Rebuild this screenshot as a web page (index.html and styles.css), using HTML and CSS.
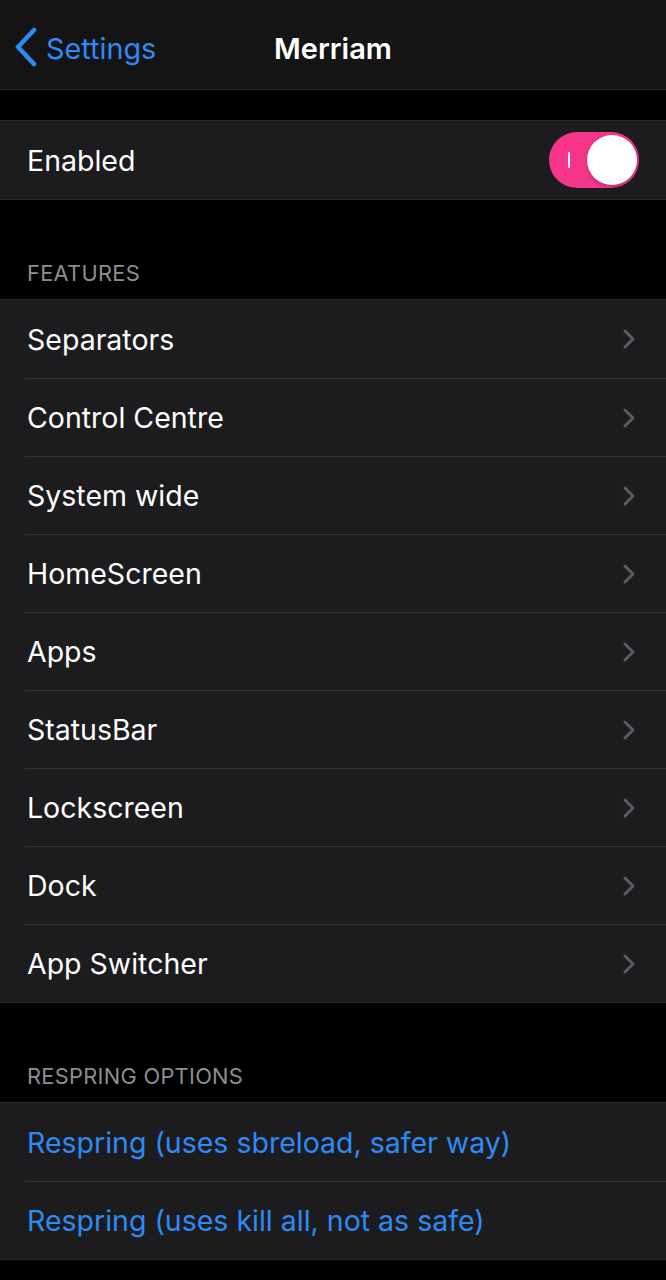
FILE: index.html
```html
<!DOCTYPE html>
<html>
<head>
<meta charset="utf-8">
<link rel="stylesheet" href="styles.css">
</head>
<body>
<div class="page">
  <header class="nav">
    <div class="back">
      <svg class="back-icon" width="26" height="40" viewBox="0 0 26 40"><path d="M21 3 L5 20 L21 37" fill="none" stroke="#2e8af4" stroke-width="4.6" stroke-linecap="round" stroke-linejoin="round"/></svg>
      <span class="back-label">Settings</span>
    </div>
    <div class="title">Merriam</div>
  </header>

  <div class="spacer-top"></div>

  <section class="group">
    <div class="row">
      <span class="label">Enabled</span>
      <div class="switch"><span class="on-mark"></span><span class="knob"></span></div>
    </div>
  </section>

  <div class="section-header">FEATURES</div>
  <section class="group">
    <div class="row link"><span class="label">Separators</span><svg class="chev" width="14" height="22" viewBox="0 0 14 22"><path d="M3 3 L11 11 L3 19" fill="none" stroke="#5c5c60" stroke-width="3" stroke-linecap="round" stroke-linejoin="round"/></svg></div>
    <div class="row link"><span class="label">Control Centre</span><svg class="chev" width="14" height="22" viewBox="0 0 14 22"><path d="M3 3 L11 11 L3 19" fill="none" stroke="#5c5c60" stroke-width="3" stroke-linecap="round" stroke-linejoin="round"/></svg></div>
    <div class="row link"><span class="label">System wide</span><svg class="chev" width="14" height="22" viewBox="0 0 14 22"><path d="M3 3 L11 11 L3 19" fill="none" stroke="#5c5c60" stroke-width="3" stroke-linecap="round" stroke-linejoin="round"/></svg></div>
    <div class="row link"><span class="label">HomeScreen</span><svg class="chev" width="14" height="22" viewBox="0 0 14 22"><path d="M3 3 L11 11 L3 19" fill="none" stroke="#5c5c60" stroke-width="3" stroke-linecap="round" stroke-linejoin="round"/></svg></div>
    <div class="row link"><span class="label">Apps</span><svg class="chev" width="14" height="22" viewBox="0 0 14 22"><path d="M3 3 L11 11 L3 19" fill="none" stroke="#5c5c60" stroke-width="3" stroke-linecap="round" stroke-linejoin="round"/></svg></div>
    <div class="row link"><span class="label">StatusBar</span><svg class="chev" width="14" height="22" viewBox="0 0 14 22"><path d="M3 3 L11 11 L3 19" fill="none" stroke="#5c5c60" stroke-width="3" stroke-linecap="round" stroke-linejoin="round"/></svg></div>
    <div class="row link"><span class="label">Lockscreen</span><svg class="chev" width="14" height="22" viewBox="0 0 14 22"><path d="M3 3 L11 11 L3 19" fill="none" stroke="#5c5c60" stroke-width="3" stroke-linecap="round" stroke-linejoin="round"/></svg></div>
    <div class="row link"><span class="label">Dock</span><svg class="chev" width="14" height="22" viewBox="0 0 14 22"><path d="M3 3 L11 11 L3 19" fill="none" stroke="#5c5c60" stroke-width="3" stroke-linecap="round" stroke-linejoin="round"/></svg></div>
    <div class="row link"><span class="label">App Switcher</span><svg class="chev" width="14" height="22" viewBox="0 0 14 22"><path d="M3 3 L11 11 L3 19" fill="none" stroke="#5c5c60" stroke-width="3" stroke-linecap="round" stroke-linejoin="round"/></svg></div>
  </section>

  <div class="section-header">RESPRING OPTIONS</div>
  <section class="group">
    <div class="row"><span class="label action">Respring (uses sbreload, safer way)</span></div>
    <div class="row"><span class="label action">Respring (uses kill all, not as safe)</span></div>
  </section>
</div>
</body>
</html>
```

FILE: styles.css
```css
html, body {
  margin: 0;
  padding: 0;
  background: #000;
}
body {
  font-family: Inter, "Noto Sans", "Liberation Sans", sans-serif;
  color: #fff;
  width: 666px;
  height: 1280px;
  overflow: hidden;
}
.page {
  display: flex;
  flex-direction: column;
}
.nav {
  height: 90px;
  background: #141414;
  border-bottom: 1px solid #262628;
  display: grid;
  grid-template-columns: 1fr auto 1fr;
  align-items: center;
  box-sizing: border-box;
}
.back {
  display: flex;
  align-items: center;
  gap: 7px;
  padding-left: 13px;
  margin-top: 8px;
}
.back-icon {
  display: block;
  margin-top: -4px;
}
.back-label {
  color: #2e8af4;
  font-size: 28.8px;
}
.title {
  font-size: 29px;
  font-weight: 600;
  margin-top: 8px;
}
.spacer-top {
  height: 30px;
}
.group {
  background: #1c1c1e;
  border-top: 1px solid #2a2a2c;
  border-bottom: 1px solid #2a2a2c;
}
.row {
  height: 78px;
  box-sizing: border-box;
  display: flex;
  align-items: center;
  justify-content: space-between;
  padding: 0 30px 0 27px;
}
.row + .row {
  border-top: 1px solid #323234;
  margin-left: 25px;
  padding-left: 2px;
}
.label {
  font-size: 28.5px;
  color: #fff;
}
.label.action {
  color: #2e8af4;
}
.chev {
  display: block;
}
.section-header {
  height: 99px;
  box-sizing: border-box;
  display: flex;
  align-items: flex-end;
  padding: 0 0 13px 27px;
  color: #8d8d93;
  font-size: 21.8px;
  letter-spacing: 0.3px;
}
.switch {
  width: 90px;
  height: 56px;
  border-radius: 28px;
  background: #f7358a;
  display: flex;
  align-items: center;
  justify-content: space-between;
  padding: 0 2px 0 19px;
  box-sizing: border-box;
  margin-right: -3px;
}
.on-mark {
  width: 2px;
  height: 16px;
  background: #fff;
  border-radius: 1px;
}
.knob {
  width: 50px;
  height: 50px;
  border-radius: 50%;
  background: #fff;
  box-shadow: 0 2px 4px rgba(0,0,0,0.2);
}
```
